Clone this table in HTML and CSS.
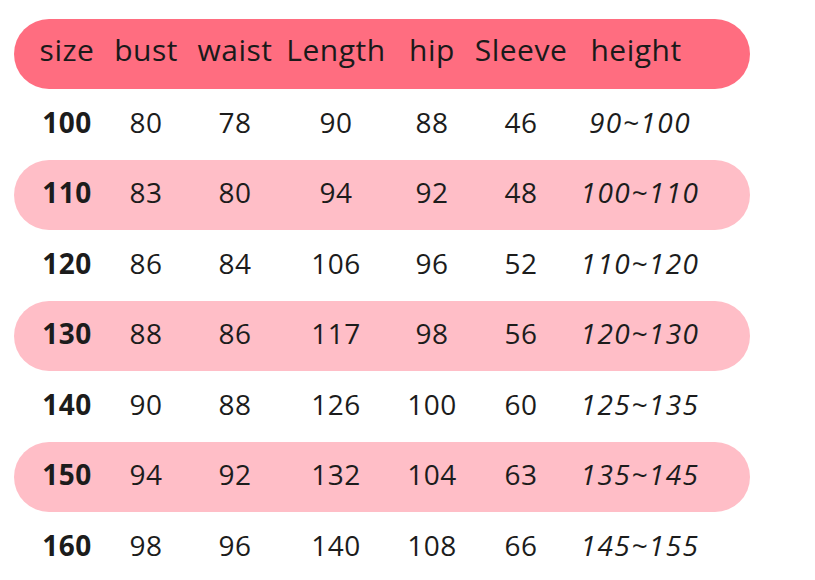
FILE: index.html
```html
<!DOCTYPE html>
<html>
<head>
<meta charset="utf-8">
<link rel="stylesheet" href="styles.css">
</head>
<body>
<div class="chart">
  <div class="row head">
    <span>size</span><span>bust</span><span>waist</span><span>Length</span><span>hip</span><span>Sleeve</span><span class="hh">height</span>
  </div>
  <div class="row">
    <span class="sz">100</span><span>80</span><span>78</span><span>90</span><span>88</span><span>46</span><span class="ht">90~100</span>
  </div>
  <div class="row pink">
    <span class="sz">110</span><span>83</span><span>80</span><span>94</span><span>92</span><span>48</span><span class="ht">100~110</span>
  </div>
  <div class="row">
    <span class="sz">120</span><span>86</span><span>84</span><span>106</span><span>96</span><span>52</span><span class="ht">110~120</span>
  </div>
  <div class="row pink">
    <span class="sz">130</span><span>88</span><span>86</span><span>117</span><span>98</span><span>56</span><span class="ht">120~130</span>
  </div>
  <div class="row">
    <span class="sz">140</span><span>90</span><span>88</span><span>126</span><span>100</span><span>60</span><span class="ht">125~135</span>
  </div>
  <div class="row pink">
    <span class="sz">150</span><span>94</span><span>92</span><span>132</span><span>104</span><span>63</span><span class="ht">135~145</span>
  </div>
  <div class="row">
    <span class="sz">160</span><span>98</span><span>96</span><span>140</span><span>108</span><span>66</span><span class="ht">145~155</span>
  </div>
</div>
</body>
</html>
```
FILE: styles.css
```css
html, body {
  margin: 0;
  padding: 0;
  background: #ffffff;
}
body {
  width: 815px;
  height: 580px;
  overflow: hidden;
  font-family: "Open Sans", "Liberation Sans", sans-serif;
  color: #1c1c1c;
}
.chart {
  padding-top: 19px;
  padding-left: 14px;
  width: 736px;
}
.row {
  box-sizing: border-box;
  display: grid;
  grid-template-columns: 86px 72px 106px 96px 96px 82px 156px;
  align-items: center;
  height: 70.5px;
  padding-left: 10px;
  padding-bottom: 5px;
  border-radius: 35px;
  font-size: 28px;
  letter-spacing: 0.5px;
}
.row span {
  justify-self: center;
  white-space: nowrap;
}
.head {
  height: 70px;
  padding-bottom: 10px;
  background: #ff6d80;
  font-size: 30px;
  color: #1a1a1a;
}
.head .hh {
  margin-right: 8px;
}
.pink {
  background: #ffbec7;
}
.sz {
  font-weight: 700;
}
.ht {
  font-style: italic;
  letter-spacing: 1.5px;
}
```
